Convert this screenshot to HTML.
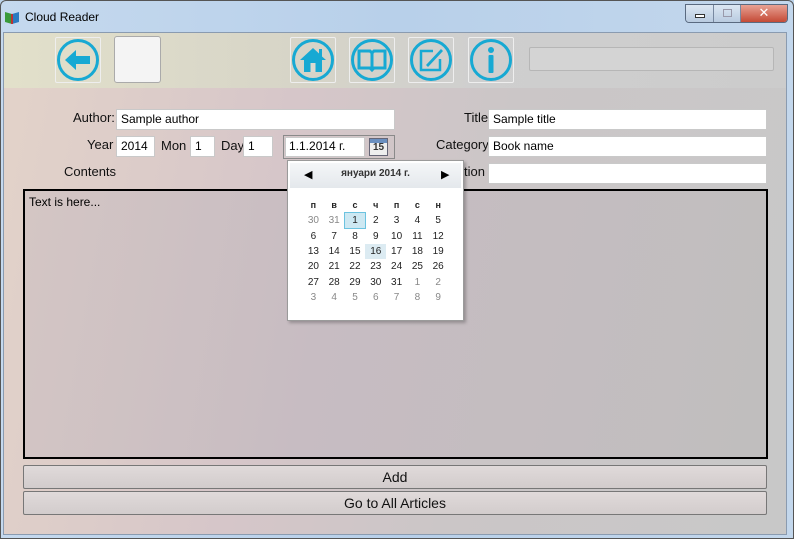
<!DOCTYPE html>
<html><head><meta charset="utf-8"><style>
*{margin:0;padding:0;box-sizing:border-box}
body{width:794px;height:539px;overflow:hidden;font-family:"Segoe UI","Liberation Sans","DejaVu Sans",sans-serif;font-size:12px;position:relative;background:#bcd3ea}
.a{position:absolute}
.frame{left:0;top:0;width:794px;height:539px;background:linear-gradient(90deg,#c5d9ee,#b8d0ea 50%,#c3d7ec);border:1px solid #555;border-radius:6px 6px 0 0}
.client{left:3px;top:32px;width:784px;height:503px;border:1px solid #8a9bb0;background:linear-gradient(100deg,#e3d3c9 0%,#d6c6c9 35%,#cbc6c7 60%,#c8c8c8 100%)}
.tb{left:4px;top:33px;width:782px;height:55px;background:linear-gradient(90deg,#e2e0ca,#d6d4c8 40%,#cfcfcf 60%,#cccccc)}
.ib{width:46px;height:46px;border:1px solid #eee;border-radius:2px}
.ib svg{width:44px;height:44px}
.lbl{font-size:13px;color:#111}
.tx{background:#fff;border:1px solid #c9c9c9;height:21px;font-size:12px;padding:2px 4px;color:#000}
.btn{left:23px;width:744px;height:24px;border:1px solid #777;border-radius:2px;background:linear-gradient(#e0dada,#d2cccc);text-align:center;font-size:14px;line-height:22px;color:#111}
.cal{left:287px;top:160px;width:177px;height:161px;background:#fff;border:1px solid #9a9a9a;box-shadow:2px 2px 3px rgba(0,0,0,.25)}
.cal table{position:absolute;left:15px;top:35px;border-collapse:collapse}
.cal td{width:20.8px;height:15.4px;text-align:center;font-size:10px;color:#222;padding:0}
.cal td.g{color:#888}
.cal th{font-size:9px;height:17px;color:#222}
</style></head><body>
<div class="a frame"></div>
<svg class="a" style="left:4px;top:10px" width="16" height="15"><path d="M1 2 L8 4 L8 14 L1 12Z" fill="#3a9a3a"/><path d="M8 4 L15 2 L15 12 L8 14Z" fill="#2b7ac0"/><path d="M7 4h2v10h-2z" fill="#b33"/></svg>
<div class="a" style="left:25px;top:10px;font-size:12px;color:#000">Cloud Reader</div>
<div class="a" style="left:685px;top:4px;width:103px;height:19px;border:1px solid #5a6a80;border-radius:0 0 4px 4px;overflow:hidden;display:flex">
<div style="width:28px;background:linear-gradient(#dce7f3,#b9cbe0);border-right:1px solid #7888a0;position:relative"><div style="position:absolute;left:9px;top:9px;width:10px;height:4px;border:1px solid #333;background:#fff"></div></div>
<div style="width:27px;background:linear-gradient(#dce7f3,#b9cbe0);border-right:1px solid #7888a0;position:relative"><div style="position:absolute;left:9px;top:4px;width:9px;height:8px;border:1px solid #99a;"></div></div>
<div style="flex:1;background:linear-gradient(#e8a294,#c44a36);color:#fff;text-align:center;font-weight:bold;font-size:13px;line-height:16px">✕</div></div>
<div class="a client"></div>
<div class="a tb"></div>
<div class="a ib" style="left:55px;top:37px"><svg viewBox="0 0 44 44"><circle cx="22" cy="22" r="19.5" fill="none" stroke="#17a9d3" stroke-width="3"/><path d="M9 22 L20 12 L20 18 L34 18 L34 26 L20 26 L20 32Z" fill="#17a9d3"/></svg></div>
<div class="a" style="left:114px;top:36px;width:47px;height:47px;background:#f4f4f4;border:1px solid #aaa;border-radius:3px"></div>
<div class="a ib" style="left:290px;top:37px"><svg viewBox="0 0 44 44"><circle cx="22" cy="22" r="19.5" fill="none" stroke="#17a9d3" stroke-width="3"/><path d="M9 22 L22 10 L28 15.5 L28 11 L31 11 L31 18.5 L35 22 L31 22 L31 34 L13 34 L13 22Z" fill="#17a9d3"/><rect x="19.5" y="25" width="5" height="9" fill="#dcdad0"/></svg></div>
<div class="a ib" style="left:349px;top:37px"><svg viewBox="0 0 44 44"><circle cx="22" cy="22" r="19.5" fill="none" stroke="#17a9d3" stroke-width="3"/><path d="M9 13 L20 13 L22 15 L24 13 L35 13 L35 30 L24 30 L22 32 L20 30 L9 30Z" fill="none" stroke="#17a9d3" stroke-width="3"/><path d="M22 15 L22 30" stroke="#17a9d3" stroke-width="3"/></svg></div>
<div class="a ib" style="left:408px;top:37px"><svg viewBox="0 0 44 44"><circle cx="22" cy="22" r="19.5" fill="none" stroke="#17a9d3" stroke-width="3"/><path d="M24 13 L12 13 L12 32 L31 32 L31 21" fill="none" stroke="#17a9d3" stroke-width="2.5"/><path d="M17 27 L32 11 L34 13 L19 29Z" fill="#17a9d3"/></svg></div>
<div class="a ib" style="left:468px;top:37px"><svg viewBox="0 0 44 44"><circle cx="22" cy="22" r="19.5" fill="none" stroke="#17a9d3" stroke-width="3"/><circle cx="22" cy="12" r="3" fill="#17a9d3"/><rect x="19.5" y="17" width="5" height="18" rx="1" fill="#17a9d3"/></svg></div>
<div class="a" style="left:529px;top:47px;width:245px;height:24px;background:#d4d4d4;border:1px solid #b6b6b6;border-radius:2px"></div>

<div class="a lbl" style="left:73px;top:110px">Author:</div>
<div class="a tx" style="left:116px;top:109px;width:279px">Sample author</div>
<div class="a lbl" style="left:87px;top:137px">Year</div>
<div class="a tx" style="left:116px;top:136px;width:39px">2014</div>
<div class="a lbl" style="left:161px;top:138px">Mon</div>
<div class="a tx" style="left:190px;top:136px;width:25px">1</div>
<div class="a lbl" style="left:221px;top:138px">Day</div>
<div class="a tx" style="left:243px;top:136px;width:30px">1</div>
<div class="a" style="left:283px;top:135px;width:112px;height:24px;border:1px solid #8a8a8a"></div>
<div class="a tx" style="left:285px;top:137px;width:80px;height:20px;padding:1px 3px">1.1.2014 г.</div>
<div class="a" style="left:369px;top:138px;width:19px;height:18px;border:1px solid #667;background:linear-gradient(#6a8fc0 0 4px,#eee 4px);font-size:10px;text-align:center;line-height:17px;font-weight:bold;color:#333">15</div>
<div class="a lbl" style="left:64px;top:164px">Contents</div>
<div class="a lbl" style="left:464px;top:110px">Title</div>
<div class="a tx" style="left:488px;top:109px;width:279px">Sample title</div>
<div class="a lbl" style="left:436px;top:137px">Category</div>
<div class="a tx" style="left:488px;top:136px;width:279px">Book name</div>
<div class="a lbl" style="left:464px;top:164px">tion</div>
<div class="a tx" style="left:488px;top:163px;width:279px"></div>

<div class="a" style="left:23px;top:189px;width:745px;height:270px;border:2px solid #000;background:linear-gradient(100deg,#d4c6c4,#c7bcc2 40%,#c0bebe);font-size:12px;padding:4px 4px">Text is here...</div>
<div class="a btn" style="top:465px">Add</div>
<div class="a btn" style="top:491px">Go to All Articles</div>

<div class="a cal">
<div style="position:absolute;left:2px;top:2px;width:171px;height:25px;background:linear-gradient(#f4f6f8,#e4e8ec)"></div>
<div style="position:absolute;left:16px;top:7px;font-size:11px">◀</div>
<div style="position:absolute;left:0;width:175px;top:7px;text-align:center;font-size:10px;font-weight:bold;color:#333">януари 2014 г.</div>
<div style="position:absolute;left:153px;top:7px;font-size:11px">▶</div>
<table>
<tr><th>п</th><th>в</th><th>с</th><th>ч</th><th>п</th><th>с</th><th>н</th></tr>
<tr><td class="g">30</td><td class="g">31</td><td style="background:#cde8f2;outline:1px solid #6cc3e0">1</td><td>2</td><td>3</td><td>4</td><td>5</td></tr>
<tr><td>6</td><td>7</td><td>8</td><td>9</td><td>10</td><td>11</td><td>12</td></tr>
<tr><td>13</td><td>14</td><td>15</td><td style="background:#dcebf2">16</td><td>17</td><td>18</td><td>19</td></tr>
<tr><td>20</td><td>21</td><td>22</td><td>23</td><td>24</td><td>25</td><td>26</td></tr>
<tr><td>27</td><td>28</td><td>29</td><td>30</td><td>31</td><td class="g">1</td><td class="g">2</td></tr>
<tr><td class="g">3</td><td class="g">4</td><td class="g">5</td><td class="g">6</td><td class="g">7</td><td class="g">8</td><td class="g">9</td></tr>
</table></div>
</body></html>
